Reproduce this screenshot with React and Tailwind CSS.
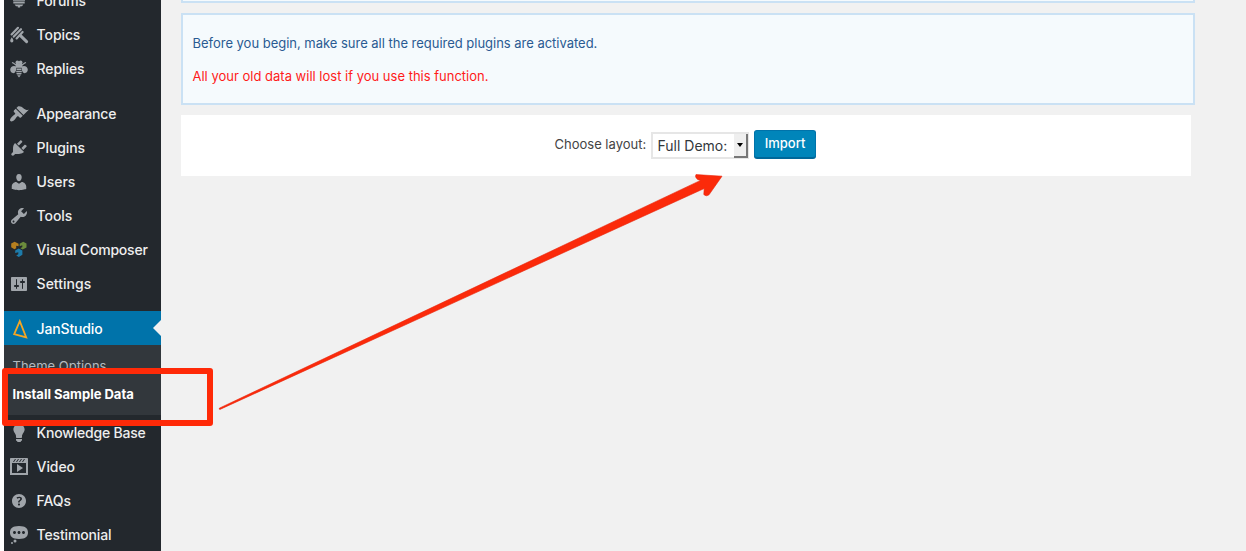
import React from "react";

const glyphs = {
  topics: (
    <>
      <g stroke="currentColor" strokeWidth="2.2" strokeLinecap="round">
        <path d="M2.600 9.400L9 2.800M4.800 11.600L12 4.200M7.600 13.400L13.600 7" />
        <path d="M11.200 10.400L17.600 16.600" strokeWidth="3" />
      </g>
      <path d="M2.800 12.200c1 1.500 1.600 2.500 1.600 3.600a1.600 1.600 0 0 1-3.200 0c0-1.100.7-2.100 1.600-3.600z" />
    </>
  ),
  replies: (
    <>
      <circle cx="8.400" cy="3.400" r="1.900" />
      <circle cx="11.600" cy="3.400" r="1.900" />
      <path d="M6.600 5h6.800v3.800H6.600z" />
      <path d="M5.200 4.600L3 3.400M14.800 4.600L17 3.400M7 6L4.600 4.200M13 6l2.400-1.800" stroke="currentColor" strokeWidth="1.100" />
      <path d="M7.200 7.600C4.300 6 1.200 8 1.200 10.800c0 2.800 3 4.300 4.700 2.700 1.300-1.200 1.500-3.300 1.300-5.900zM12.800 7.600c2.900-1.600 6 .4 6 3.200 0 2.800-3 4.300-4.700 2.700-1.300-1.200-1.500-3.300-1.300-5.900z" />
      <path d="M7.600 9.400h4.800v1.500H7.600zM7.200 11.700h5.600v1.500H7.200zM7.300 14h5.400l-.6 1.500H7.900zM8.200 16.200h3.600L10 18.400z" />
    </>
  ),
  forums: <path d="M6 3h8v1.800H6zM5 5.800h10v1.800H5zM4 8.300h12v1.500H4zM4.300 10.600h11.400v1.900H4.300zM5.600 13.600h8.800L13 15.300h-1.800v1.200H8.800v-1.200H7z" />,
  appearance: (
    <path d="M14.48 11.06L7.41 3.99l1.5-1.5c.5-.56 2.3-.47 3.51.32 1.21.8 1.43 1.28 2.91 2.1 1.18.64 2.45 1.26 4.45.85zm-.71.71L6.7 4.7 4.93 6.47c-.39.39-.39 1.02 0 1.41l1.06 1.06c.39.39.39 1.03 0 1.42-.6.6-1.43 1.11-2.21 1.69-.35.26-.7.53-1.01.84C1.43 14.23.4 16.08 1.4 17.07c.99 1 2.84-.03 4.18-1.36.31-.31.58-.66.85-1.02.57-.78 1.08-1.61 1.69-2.21.39-.39 1.02-.39 1.41 0l1.06 1.06c.39.39 1.02.39 1.41 0z" />
  ),
  plugins: (
    <path d="M13.11 4.36L9.87 7.6 8 5.73l3.24-3.24c.35-.34 1.05-.2 1.56.32.52.51.66 1.21.31 1.55zm-8 1.77l.91-1.12 9.01 9.01-1.19.84c-.71.71-2.63 1.16-3.82 1.16H6.14L4.9 17.26c-.59.59-1.54.59-2.12 0-.59-.58-.59-1.53 0-2.12l1.24-1.24v-3.88c0-1.13.4-3.19 1.09-3.89zm7.26 3.97l3.24-3.24c.34-.35 1.04-.21 1.55.31.52.51.66 1.21.31 1.55l-3.24 3.25z" />
  ),
  users: (
    <path d="M10 9.25c-2.27 0-2.73-3.44-2.73-3.44C7 4.02 7.82 2 9.97 2c2.16 0 2.98 2.02 2.71 3.81 0 0-.41 3.44-2.68 3.44zm0 2.57L12.72 10c2.39 0 4.52 2.33 4.52 4.53v2.49s-3.65 1.13-7.24 1.13c-3.65 0-7.24-1.13-7.24-1.13v-2.49c0-2.25 1.94-4.48 4.47-4.48z" />
  ),
  tools: (
    <path d="M16.68 9.77c-1.34 1.34-3.3 1.67-4.95.99l-5.41 6.52c-.99.99-2.59.99-3.58 0s-.99-2.59 0-3.57l6.52-5.42c-.68-1.65-.35-3.61.99-4.95 1.28-1.28 3.12-1.62 4.72-1.06l-2.89 2.89 2.82 2.82 2.86-2.87c.53 1.58.18 3.39-1.08 4.65zM3.81 16.21c.4.39 1.04.39 1.43 0 .4-.4.4-1.04 0-1.43-.39-.4-1.03-.4-1.43 0-.39.39-.39 1.03 0 1.43z" />
  ),
  composer: (
    <>
      <path fill="#b57f1f" d="M2.200 3.600L5.600 1.800l4 1.900v2.500L7.200 5.800v2.400L5.400 9.200 2.200 7.300z" />
      <path fill="#6c8c3c" d="M10.600 3.800l3.600-2 3.300 1.800v3.900l-3.800 2-2.300-1.300 1.900-1.200V5.300l-2.700.9z" />
      <path fill="#1d7cab" d="M6.200 10.600l3.500-2 3.700 2v4.100l-3.600 2.300-2.600-1.400 2.100-1.400v-2L6.200 13z" />
    </>
  ),
  settings: (
    <path d="M18 16V4c0-.55-.45-1-1-1H3c-.55 0-1 .45-1 1v12c0 .55.45 1 1 1h14c.55 0 1-.45 1-1zM8 11h1c.55 0 1 .45 1 1s-.45 1-1 1H8v1.500c0 .28-.22.5-.5.5s-.5-.22-.5-.5V13H6c-.55 0-1-.45-1-1s.45-1 1-1h1V5.500c0-.28.22-.5.5-.5s.5.22.5.5V11zm5-2h-1c-.55 0-1-.45-1-1s.45-1 1-1h1V5.500c0-.28.22-.5.5-.5s.5.22.5.5V7h1c.55 0 1 .45 1 1s-.45 1-1 1h-1v5.500c0 .28-.22.5-.5.5s-.5-.22-.5-.5V9z" />
  ),
  jan: <path d="M10.800 2.200L5.200 15.200l12 3.200z" fill="none" stroke="#f5a623" strokeWidth="1.800" />,
  bulb: (
    <path d="M10 1c3.110 0 5.630 2.520 5.630 5.620 0 1.840-2.030 4.580-2.030 4.580-.33.44-.6 1.250-.6 1.800v1c0 .55-.45 1-1 1H8c-.55 0-1-.45-1-1v-1c0-.55-.27-1.360-.6-1.800 0 0-2.020-2.740-2.020-4.580C4.380 3.520 6.890 1 10 1zM7 16.870V16h6v.87c0 .62-.13 1.130-.75 1.130H12c0 .62-.4 1-1.020 1h-2c-.61 0-.98-.38-.98-1h-.25c-.62 0-.75-.51-.75-1.130z" />
  ),
  video: (
    <path fillRule="evenodd" d="M2 1h16c.55 0 1 .45 1 1v16l-18-.02V2c0-.55.45-1 1-1zm4 1L4 5h1l2-3H6zm4 0H9L7 5h1zm3 0h-1l-2 3h1zm3 0h-1l-2 3h1zm1 14V6H3v10h14zM8 7l6 4-6 4V7z" />
  ),
  help: (
    <path d="M17 10c0-3.870-3.140-7-7-7-3.870 0-7 3.130-7 7s3.130 7 7 7c3.860 0 7-3.130 7-7zm-6.300 1.480H9.140v-.43c0-.38.08-.7.24-.98s.46-.57.88-.89c.41-.29.68-.53.81-.71.14-.18.2-.39.2-.62 0-.25-.09-.44-.28-.58-.19-.13-.45-.19-.79-.19-.58 0-1.250.19-2 .57l-.64-1.280c.87-.49 1.800-.74 2.770-.74.81 0 1.450.2 1.920.58.48.39.71.91.71 1.550 0 .43-.09.8-.29 1.110-.19.32-.57.67-1.110 1.060-.38.28-.61.49-.71.63-.1.15-.15.34-.15.57v.35zm-1.470 2.740c-.18-.17-.27-.42-.27-.73 0-.33.08-.58.26-.75s.43-.25.77-.25c.32 0 .57.09.75.26s.27.42.27.74c0 .3-.09.55-.27.72-.18.18-.43.27-.75.27-.33 0-.58-.09-.76-.26z" />
  ),
  status: (
    <path fillRule="evenodd" d="M10 1c7 0 9 2.910 9 6.500S17 14 10 14s-9-2.910-9-6.500S3 1 10 1zM5.500 9C6.330 9 7 8.330 7 7.500S6.330 6 5.500 6 4 6.670 4 7.500 4.670 9 5.500 9zM10 9c.83 0 1.500-.67 1.500-1.500S10.830 6 10 6s-1.500.67-1.500 1.500S9.170 9 10 9zm4.500 0c.83 0 1.500-.67 1.500-1.500S15.330 6 14.500 6 13 6.670 13 7.500 13.670 9 14.500 9zM6 14.500a1.500 1.500 0 1 1 0 3 1.500 1.500 0 0 1 0-3zM3 17a1 1 0 1 1 0 2 1 1 0 0 1 0-2z" />
  ),
};

function Item({ icon, label, track = "tracking-[-0.1px]", active = false }) {
  return (
    <li
      className={
        "relative flex h-[34px] shrink-0 items-center gap-[8px] pt-px pl-[4.600px] text-[14px] font-medium leading-[20px] whitespace-nowrap " +
        (active ? "bg-[#0073aa] text-white " : "text-[#eeeeee] ")
      }
    >
      <svg viewBox="0 0 20 20" className="size-[20px] shrink-0 fill-current text-[#a0a5aa]">
        {glyphs[icon]}
      </svg>
      <span className={track}>{label}</span>
      {active && (
        <svg viewBox="0 0 8 16" className="absolute top-[9px] right-0 h-4 w-2 fill-[#f1f1f1]">
          <path d="M8 0v16L0 8z" />
        </svg>
      )}
    </li>
  );
}

export default function App() {
  return (
    <div className="relative flex h-[551px] w-[1246px] overflow-hidden bg-[#f1f1f1] font-['Inter',sans-serif]">
      <div className="w-[4px] shrink-0 bg-white" />
      <nav className="flex w-[156.500px] shrink-0 flex-col overflow-hidden bg-[#23282d]">
        <ul className="-mt-[17px] flex flex-col">
          <Item icon="forums" label="Forums" />
          <Item icon="topics" label="Topics" />
          <Item icon="replies" label="Replies" />
          <li className="h-[11px]" />
          <Item icon="appearance" label="Appearance" track="tracking-[-0.2px]" />
          <Item icon="plugins" label="Plugins" />
          <Item icon="users" label="Users" />
          <Item icon="tools" label="Tools" />
          <Item icon="composer" label="Visual Composer" track="tracking-[-0.2px]" />
          <Item icon="settings" label="Settings" track="tracking-normal" />
          <li className="h-[11px]" />
          <Item icon="jan" label="JanStudio" track="tracking-[-0.150px]" active />
          <li className="flex h-[70px] flex-col bg-[#32373c] pt-[7px] pl-[8.500px] text-[13px] whitespace-nowrap">
            <span className="h-[28px] leading-[29px] text-[#b4b9be]">Theme Options</span>
            <span className="h-[28px] leading-[28px] font-bold text-white">Install Sample Data</span>
          </li>
          <Item icon="bulb" label="Knowledge Base" track="tracking-[-0.2px]" />
          <Item icon="video" label="Video" />
          <Item icon="help" label="FAQs" />
          <Item icon="status" label="Testimonial" track="tracking-[-0.150px]" />
        </ul>
      </nav>

      <main className="flex min-w-0 flex-1 flex-col pl-[20px] text-[13px]">
        <div className="h-[3px] w-[1014px] border-2 border-t-0 border-[#cae1f4] bg-[#f5fafd]" />
        <section className="mt-[10px] flex h-[92px] w-[1014px] flex-col gap-[13px] border-2 border-[#cae1f4] bg-[#f5fafd] pt-[18px] pl-[10px] leading-[20px]">
          <p className="tracking-[-0.020px] text-[#2a5a92]">Before you begin, make sure all the required plugins are activated.</p>
          <p className="text-[#ff1a1a]">All your old data will lost if you use this function.</p>
        </section>
        <section className="mt-[10px] flex h-[61px] w-[1010px] items-start bg-white pt-[15px] pl-[374px]">
          <span className="w-[96px] leading-[29px] whitespace-nowrap text-[#444444]">Choose layout:</span>
          <button className="mt-[2px] flex h-[27px] w-[98px] border-2 border-r border-[#e6e6e6] bg-white text-[14px] text-[#32373c]">
            <span className="w-[81px] pl-[5px] text-left leading-[23px] whitespace-nowrap">Full Demo:</span>
            <span className="flex h-[24px] flex-1 items-center justify-center border-r-2 border-b-2 border-[#777777] bg-[#efefef]">
              <svg viewBox="0 0 6 4" className="h-[4px] w-[6px] fill-black">
                <path d="M0 0h6L3 4z" />
              </svg>
            </span>
          </button>
          <button className="ml-[5.500px] h-[28px] w-[62px] rounded-[3px] border border-[#0073aa] border-b-[#006799] bg-[#0085ba] text-[13px] font-medium text-white shadow-[0_1px_0_#006799]">
            Import
          </button>
        </section>
      </main>

      <div className="absolute top-[368px] left-[2px] h-[58px] w-[210.500px] rounded-[3px] border-6 border-[#ff2a08]" />
      <svg viewBox="0 0 520 250" className="absolute top-[165px] left-[210px] h-[250px] w-[520px]">
        <path
          d="M9.300 243.200L490.500 15.400L487.500 14.400Q484.500 12 486 9.600L512 11.200L499 29.800Q496 32 493.800 29.500L494.200 23.500L10 244.400Q9 244.500 9.300 243.200z"
          fill="#fb2a0a"
          stroke="#e8230a"
          strokeWidth="0.600"
          strokeLinejoin="round"
        />
      </svg>
    </div>
  );
}
